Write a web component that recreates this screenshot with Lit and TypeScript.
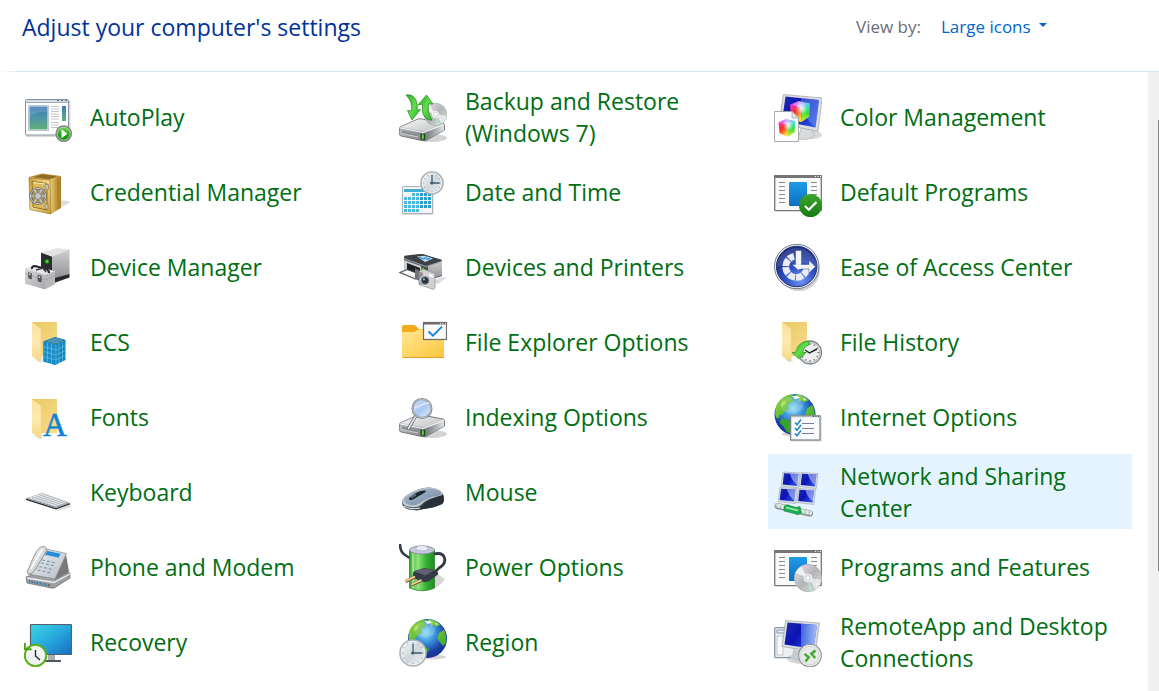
import { LitElement, html, svg, css, SVGTemplateResult } from "lit";
import { customElement, state } from "lit/decorators.js";
import { classMap } from "lit/directives/class-map.js";

const rows = (from: number, step: number, count: number) =>
  Array.from({ length: count }, (_, i) => from + i * step);

const ring = (cx: number, cy: number, r1: number, r2: number, count: number) =>
  rows(0, (Math.PI * 2) / count, count)
    .map((a) => {
      const c = Math.cos(a);
      const s = Math.sin(a);
      return `M${(cx + r1 * c).toFixed(2)} ${(cy + r1 * s).toFixed(2)}L${(cx + r2 * c).toFixed(2)} ${(cy + r2 * s).toFixed(2)}`;
    })
    .join("");

/* ---------- shared pieces ---------- */

const openFolder = (y: number) => svg`
  <path d="M8 ${y}h25v34H16z" fill="url(#folderBack)"/>
  <path d="M8 ${y}l9 7v31.500q0 2-1.600 1l-7.400-5.500z" fill="url(#folderFlap)"/>
  <path d="M17 ${y + 7}v31" stroke="#f6da86" stroke-width="1" fill="none"/>
  <path d="M9 ${y + 37}l7 3.500 4-1-3-2z" fill="#cfcfcf" opacity=".4"/>`;

const clock = (cx: number, cy: number, r: number) => svg`
  <circle cx=${cx} cy=${cy} r=${r} fill="url(#clockFace)" stroke="#aab2b9" stroke-width="1.600"/>
  <circle cx=${cx} cy=${cy} r=${r - 1.3} fill="none" stroke="#fff" stroke-width=".6"/>
  <path d=${ring(cx, cy, r - 3.2, r - 1.8, 12)} stroke="#98a3ac" stroke-width=".9"/>
  <path d="M${cx} ${cy - r * 0.72}V${cy + 1.5}M${cx - 2} ${cy}H${cx + r * 0.7}" stroke="#3e5c70" stroke-width="1.300" fill="none"/>
  <circle cx=${cx} cy=${cy} r="1.200" fill="#3e5c70"/>`;

const globe = (cx: number, cy: number, r: number) => svg`
  <ellipse cx=${cx + 3} cy=${cy + r - 1} rx=${r * 0.8} ry="2.500" fill="#777" opacity=".3"/>
  <circle cx=${cx} cy=${cy} r=${r} fill="url(#ocean)"/>
  <g transform="translate(${cx} ${cy}) scale(${r / 20})">
    <path d="M-19-5C-18-13-11-18-4-19.500L-1-18-4-16-1-14-4-11-7-10-6-6-10-3-13 1-15 0-16 4-18.500 3Q-20 0-19-5z" fill="url(#land)"/>
    <path d="M1-19.500Q8-19 13-14L9-12 6-14 3-12 4-16 0-17zM12-6L17-9Q20-3 19 4L16 8 13 4 10 0z" fill="url(#land)"/>
    <path d="M-13 4L-7 5-1 9 2 11-1 15-3 19-8 17-11 12-15 8z" fill="#35a32c"/>
    <path d="M-3-18L2-18 5-16 0-15zM8-16l3 1-2 1z" fill="#eefaf0"/>
    <path d="M-13-12l4-2-1 4-4 3z" fill="#b8e25a" opacity=".8"/>
    <ellipse cx="-3" cy="-9" rx="11" ry="8" fill="#fff" opacity=".17"/>
  </g>`;

const panelWindow = svg`
  <rect x=".7" y="6.700" width="46.600" height="35" rx="1" fill="#fafafa" stroke="#767676" stroke-width="1.300"/>
  <path d="M0 6.500q0-.5.500-.5h47q.5 0 .5.500V9H0z" fill="#757575"/>
  <path d="M41 7.500h1M43.500 7.500h1M46 7.500h1" stroke="#fff"/>
  <path d=${rows(13.5, 4, 6).map((y) => `M5 ${y}h6`).join("")} stroke="#8a8a8a"/>
  <path d=${rows(13.5, 4, 6).map((y) => `M37 ${y}h6`).join("")} stroke="#8a8a8a"/>
  <rect x="15" y="13" width="18" height="24" rx="1" fill="url(#azure)"/>`;

const drive = (y: number) => svg`
  <ellipse cx="32" cy=${y + 19} rx="16" ry="4" fill="#555" opacity=".25"/>
  <path d="M1 ${y + 8}L19 ${y}Q21 ${y - 0.5} 23 ${y}L44 ${y + 4}Q46 ${y + 5} 45.500 ${y + 7}V${y + 11}L27 ${y + 21.5}Q25 ${y + 22} 23 ${y + 21.5}L2 ${y + 17}Q0 ${y + 16} 0 ${y + 14}z" fill="url(#metalSide)" stroke="#5f6367" stroke-width=".8"/>
  <path d="M25 ${y + 13.5}L45 ${y + 6}V${y + 11}L26 ${y + 21.5}z" fill="url(#driveRight)"/>
  <path d="M1.500 ${y + 8}L19 ${y + 0.5}Q21 ${y} 23 ${y + 0.5}L44.500 ${y + 5}L26 ${y + 12.5}Q24 ${y + 13} 22 ${y + 12.3}z" fill="url(#metalTop)"/>
  <path d="M1 ${y + 8.8}L24 ${y + 13.6} 45 ${y + 5.6}" stroke="#f8f8f8" stroke-width="1" fill="none"/>
  <path d="M3 ${y + 11.500}l16 3.500v3.500L3 ${y + 15}z" fill="#8b8e91"/>
  <path d="M3 ${y + 14.500}l16 3.500" stroke="#dfe1e2" stroke-width=".8"/>
  <path d="M21.500 ${y + 14.5}l4.500 .5v6l-4.500-.8z" fill="#23372a"/>
  <path d="M22.800 ${y + 15.300}l2 .2v4.500l-2-.3z" fill="#51e425"/>`;

const disc = (cx: number, cy: number, r: number) => svg`
  <circle cx=${cx} cy=${cy} r=${r - 0.3} fill="url(#discFill)" stroke="#a9adb1" stroke-width=".7"/>
  <path d="M${cx} ${cy}L${cx - r * 0.9} ${cy - r * 0.35}A${r} ${r} 0 0 1 ${cx - r * 0.5} ${cy - r * 0.82}z" fill="#fff" opacity=".7"/>
  <path d="M${cx} ${cy}L${cx + r * 0.95} ${cy + r * 0.1}A${r} ${r} 0 0 1 ${cx + r * 0.55} ${cy + r * 0.78}z" fill="#fff" opacity=".55"/>
  <path d="M${cx} ${cy}L${cx - r * 0.3} ${cy - r * 0.9}A${r} ${r} 0 0 1 ${cx - r * 0.1} ${cy - r * 0.94}z" fill="#ecb8e6" opacity=".8"/>
  <path d="M${cx} ${cy}L${cx + r * 0.3} ${cy + r * 0.9}A${r} ${r} 0 0 1 ${cx + r * 0.1} ${cy + r * 0.94}z" fill="#b3efc0" opacity=".8"/>
  <circle cx=${cx} cy=${cy} r=${r * 0.28} fill="#d7dadd" stroke="#f8f8f8" stroke-width=".9"/>
  <circle cx=${cx} cy=${cy} r=${r * 0.12} fill="#fff"/>`;

const hueCube = (x: number, y: number, s: number) => svg`
  <g transform="translate(${x} ${y}) scale(${s})">
    <path d="M0 3L7 0 16 2 9 5.500z" fill="url(#hueTop)"/>
    <path d="M0 3L9 5.500V17L1 13.500z" fill="url(#hueLeft)"/>
    <path d="M9 5.500L16 2 15.300 12.500 9 17z" fill="url(#hueRight)"/>
    <ellipse cx="9" cy="6" rx="5" ry="5.500" fill="url(#hueGlow)"/>
  </g>`;

/* ---------- icons, each on a 48 x 48 grid ---------- */

const icons: Record<string, SVGTemplateResult> = {
  autoplay: svg`
    <rect x="2" y="6" width="44.500" height="37" rx="1" fill="#999" opacity=".35"/>
    <rect x="1.500" y="5.500" width="43" height="35.500" rx="1" fill="#fff" stroke="#8795a3"/>
    <path d="M2 6h42v3H2z" fill="#d3dde6"/>
    <path d="M2 8.500h42" stroke="#8ea0b0" stroke-width=".8"/>
    <path d="M33 6.500h2M37 6.500h2M41 6.500h2" stroke="#51718e"/>
    <rect x="4.500" y="11.500" width="20" height="25" fill="#eef3f6" stroke="#b9c8d2"/>
    <rect x="5.500" y="12.500" width="18" height="23" fill="url(#media)"/>
    <path d="M5.500 23q8-6 18-5v-5.500h-18z" fill="#fff" opacity=".13"/>
    <path d=${[...rows(12.5, 2.5, 6), 28.5, 31, 33.5].map((y) => `M27 ${y}h8`).join("")} stroke="#c2c6ca"/>
    <rect x="38" y="12" width="4" height="15" fill="url(#media)"/>
    <circle cx="39.700" cy="39.700" r="7.600" fill="url(#green)" stroke="#858c87" stroke-width="1.600"/>
    <circle cx="39.700" cy="39.700" r="6.400" fill="none" stroke="#d9f5cf" stroke-width=".6"/>
    <path d="M37.500 35.200l6 4.500-6 4.500z" fill="#fff"/>`,

  credential: svg`
    <path d="M26 44L45 34q2-2-2-2l-8-1z" fill="#888" opacity=".3"/>
    <path d="M5 8L18 4.500 37 7 26 11z" fill="#b59034"/>
    <path d="M9 8L19 5.500 33 7.500 25 10z" fill="#8f6d22"/>
    <path d="M26 11L37 7V39L27 45z" fill="url(#goldSide)"/>
    <path d="M5 8.500L26 11 27 45 6 40.500z" fill="url(#gold)" stroke="#9a7420" stroke-width=".7"/>
    <path d="M8 12.500L23 14.500V41L9 38z" fill="#dcb85a" stroke="#8c6818" stroke-width=".9"/>
    <path d="M9 13.500l13.500 1.800" stroke="#fff2bd"/>
    <path d="M34 8.500V40" stroke="#a17a25" stroke-width=".7"/>
    <circle cx="14" cy="27" r="7.500" fill="#8d8464" opacity=".7"/>
    <circle cx="14" cy="27" r="7.600" fill="none" stroke="#65686b" stroke-width="2.200"/>
    <circle cx="14" cy="27" r="7.600" fill="none" stroke="#dcdddf" stroke-width=".8"/>
    <path d=${ring(14, 27, 2, 7.5, 6)} stroke="#d4d5d6" stroke-width="1.200"/>
    <circle cx="14" cy="27" r="3.400" fill="#c3c5c7" stroke="#74777a" stroke-width=".8"/>
    <path d="M21 15.500h3.500v5H21zM21 35h3v5h-3z" fill="#c4c4bb" stroke="#7d725a" stroke-width=".6"/>`,

  device: svg`
    <path d="M17 8.500L28 12.500V36L17 31z" fill="#2c2d2f"/>
    <path d="M17 8.500L34 4 45.500 5.500 28 12.500z" fill="#e3e3e5"/>
    <path d="M28 12.500L45.500 5.500V31L28 36z" fill="url(#greyDown)"/>
    <path d="M29 34.500l16.500-4.500v3.500L30 39z" fill="#2a2a2c"/>
    <circle cx="23" cy="17.500" r="2.600" fill="#1d7a17" opacity=".7"/>
    <circle cx="23" cy="17.500" r="1.400" fill="#35f020"/>
    <path d="M1 24.500L12 21.500 31 27.500V40L21 45.300 1 39.500z" fill="#c9c9cd"/>
    <path d="M1 24.500L12 21.500 31 27.500 21 31z" fill="#e8e8ea"/>
    <path d="M1 24.500L21 31V45.300L1 39.500z" fill="url(#caseFront)"/>
    <path d="M21 31l10-3.500V40l-10 5.300z" fill="#b7b7bc"/>
    <path d="M1 29.500L21 36l10-4" stroke="#9c9ca1" stroke-width=".7" fill="none"/>
    <path d="M8 25q-.5-3 3-3l11 3q3 1 3 4" stroke="#26272a" stroke-width="2.200" fill="none"/>
    <path d="M12 26l7-2 3 4" stroke="#3a3b3e" stroke-width="1.500" fill="none"/>
    <path d="M4.500 28.500l3 1V35l-3-1zM14 31l3.200 1v6L14 37z" fill="#55565a" stroke="#38393b" stroke-width=".5"/>
    <path d="M5 29l1.500.5v2L5 31zM14.600 31.700l1.600.5v2l-1.600-.5z" fill="#c8c8cc"/>`,

  ecs: svg`
    ${openFolder(3)}
    <path d="M17 37h3v5l-3 1z" fill="#e7eef5"/>
    <path d="M19.500 22.500L31 18l10.500 3V41L31 46l-11.500-3.500z" fill="#1583bd"/>
    <path d="M19.500 22.500L31 18l10.500 3L32 25.500z" fill="#3f7f9d"/>
    <path d="M19.500 22.500L32 25.500V46L19.500 42.500z" fill="#1c8cc6"/>
    <path d="M19.500 27.500L32 31l9.500-4.500M19.500 32.500L32 36l9.500-4.500M19.500 37.500L32 41l9.500-4.500M23.500 24v19.500M27.500 25v20M35 24.500v19.500M38.500 23v19.500M32 25.500V46" stroke="#62bfe8" stroke-width=".7" fill="none"/>
    <path d="M23.500 21L35 24M27.500 19.500l11 3M23 23.500L34.500 19M27.500 24.500l10.500-4.500" stroke="#5fb4d8" stroke-width=".6"/>`,

  fonts: svg`
    ${openFolder(5)}
    <text x="31" y="42" text-anchor="middle" font-family="Liberation Serif, serif" font-size="33" fill="#0c83d4" stroke="#0c83d4" stroke-width=".5">A</text>`,

  keyboard: svg`
    <path d="M3 31L32 41.500 47 36v2L33 42z" fill="#777" opacity=".3"/>
    <path d="M2 29.500L32 39 46 34v1.500L32 40.500 2 31z" fill="#26333a"/>
    <path d="M2 29.500L18 24 46 34 32 39z" fill="#8b949a"/>
    <path d="M4.500 29L18 24.600 43.500 33.700 32 37.800z" fill="#f1f3f5"/>
    <path d="M8 28L35 36.700M11.500 26.800L38 35.600M15 25.600L41 34.600" stroke="#a0a9af" stroke-width=".6"/>
    <path d=${rows(0, 1, 9).map((i) => `M${7.5 + i * 2.9} ${30 + i * 0.95}l13-4.500`).join("")} stroke="#a0a9af" stroke-width=".6"/>`,

  phone: svg`
    <path d="M2 33L20 27 46 29v5L31 43.500Q29 44.500 27 44L3 39z" fill="#9b9fa2" stroke="#66696c" stroke-width=".7"/>
    <path d="M3 34L30 38.500 46 30" stroke="#f0f0f0" stroke-width="1.300" fill="none"/>
    <path d="M5 36.300l21 4.200v2l-21-4.200z" fill="#5e6468"/>
    <path d="M6 37.500l19 3.800" stroke="#55bdf0" stroke-width="1.500" stroke-dasharray="1.500 1.300"/>
    <path d="M42 10L45 28 31 36 30 33z" fill="#77797d"/>
    <path d="M20 4.500L42.500 9.500 31 35 4 30z" fill="url(#phoneBody)" stroke="#85888c" stroke-width=".7"/>
    <path d="M23 6.500l14 3-2.200 4.500-14.300-3z" fill="#2b8ad8" stroke="#b9dff5" stroke-width=".7"/>
    <path d="M18 16l14 3M17 19l14 3M15 22.500l14 3M13.500 26l13.500 3" stroke="#7f9ab3" stroke-width="1.200" stroke-dasharray="3 2"/>
    <path d="M5 24Q1.500 28.500 4.500 30 8 31 11 26L22 8Q24 3.500 20 2.500 16 2 13.500 6L10 12Q9 15 7 19z" fill="url(#metalTop)" stroke="#7b7e82" stroke-width=".8"/>
    <path d="M7 25Q11 17 18.500 5" stroke="#fff" stroke-width="1.500" fill="none"/>`,

  recovery: svg`
    <rect x="6.500" y="5.500" width="41" height="30" rx=".5" fill="url(#screenCyan)" stroke="#55606a" stroke-width="1.200"/>
    <path d="M24 36h7v5.500h-7z" fill="#a8adb1"/>
    <path d="M21 41h16v2H21z" fill="#53585d"/>
    <circle cx="11.500" cy="36.500" r="10.700" fill="#f3f3f3" stroke="#5bb01c" stroke-width="2"/>
    <path d="M.8 24v6.200h6.800" stroke="#46a512" stroke-width="2" fill="none"/>
    <path d="M1 30.500l3.500-1.800" stroke="#46a512" stroke-width="2"/>
    <path d="M11.500 31v6l4.500 4" stroke="#222" stroke-width="1.300" fill="none"/>`,

  backup: svg`
    ${drive(25)}
    ${disc(36.5, 20.5, 11.5)}
    <path d="M7 1Q14 0 17 6 19 10 18 16l3.500-.5L13 26 8.500 16.500l4 .2Q14 8 7 1z" fill="url(#greenArrow)" stroke="#24861d" stroke-width=".7"/>
    <path d="M33 26Q27 27 24 20 23 16 23.500 10L19 11 27.500 1 34 10l-4.500-.3Q28 18 33 26z" fill="url(#greenArrow)" stroke="#24861d" stroke-width=".7"/>`,

  datetime: svg`
    <rect x="3.500" y="18" width="31" height="28" fill="#888" opacity=".3"/>
    <rect x="3.500" y="17.500" width="30" height="27" rx=".5" fill="#f3f6f7" stroke="#a9b2b7"/>
    <path d="M5 20h20v3H5z" fill="#3fb1d6"/>
    ${rows(0, 1, 5).map((r) =>
      rows(0, 1, 7).map((c) =>
        (r === 0 && c < 2) || (r === 4 && c > 3)
          ? svg``
          : svg`<rect x=${5 + c * 4} y=${24 + r * 4} width="3" height="3" fill=${c > 3 ? "#2b9cc4" : "#4ab9dc"}/>`
      )
    )}
    ${clock(33, 14, 11)}`,

  printers: svg`
    <path d="M30 38l14-5 3 1-8 6z" fill="#777" opacity=".25"/>
    <path d="M5 13L24 10 43 17V32L30 36 5 27z" fill="#4e5256"/>
    <path d="M29 21l14-4.500V31L29 36z" fill="url(#greyDown)"/>
    <path d="M5 13Q5 12 7 11.600L21 10Q23 9.800 25 10.500L42 15.500Q43.500 16 42.500 17L30 21.500Q28 22 26 21.500L6 14.500z" fill="#3c4246"/>
    <path d="M5 14.500L27 22.500 43 17.500" stroke="#9aa0a5" stroke-width="1" fill="none"/>
    <path d="M18 12.500l8-.8 8 2.800-8 3.500z" fill="#bfe0f6"/>
    <path d="M20 13l5 2 3-3M27 15l4-.5" stroke="#3e8dc6" stroke-width="1.300" fill="none"/>
    <path d="M5 16l17 6V32L5 27z" fill="#c9cbcd"/>
    <path d="M8 19l13 5V30L8 26z" fill="#1f2326"/>
    <path d="M1 28.500L8 25.500 20 30v3.500l-4 1.500z" fill="#e6e8ea" stroke="#4e5256" stroke-width="1.100"/>
    <path d="M4 28.500l5-1.800 9 3.300-2 2.300z" fill="#fff"/>
    <path d="M16 24.500l4.500 2V37l-4.500-2z" fill="#6e7175"/>
    <path d="M20 27.500L24 25l12 4.500V44l-2 1.300-14-4.800z" fill="#d0d2d4" stroke="#8a8d90" stroke-width=".7"/>
    <path d="M20 27.500l4 1.500v12.500L20 40z" fill="#8b8e92"/>
    <path d="M22 24.500l3-.8v2l-3 .5z" fill="#53c92c"/>
    <circle cx="26" cy="36.500" r="5" fill="#777b80" stroke="#e9eaeb"/>
    <circle cx="26" cy="36.500" r="3" fill="#24333f"/>
    <circle cx="25" cy="35.500" r="1" fill="#9fd3ee"/>
    <path d="M30 29.500l4 1.300v2.700l-4-1.300z" fill="#f5f5f5"/>`,

  explorer: svg`
    <path d="M3 8Q3 6 5 6h9q2 0 3 1l3 3h24q1 0 1 1v12H3z" fill="#f4ab1a"/>
    <path d="M3 14.500Q3 13 5 13h9q2 0 3-1l2-1.500h25q1 0 1 1V37.500q0 1.500-1.500 1.500h-39Q3 39 3 37.500z" fill="url(#folderFront)"/>
    <path d="M3.500 38.500h41" stroke="#dda128" stroke-width="1"/>
    <rect x="24.500" y="3.500" width="23" height="17" fill="#fafafa" stroke="#6c6c6c" stroke-width="1.200"/>
    <path d="M24 4h24v1.500H24z" fill="#6c6c6c"/>
    <path d="M41 4.500h1M43.500 4.500h1M46 4.500h1" stroke="#fff" stroke-width=".8"/>
    <path d="M29.500 12.500l4.500 4.200 9-9" stroke="#1583da" stroke-width="1.900" fill="none"/>`,

  indexing: svg`
    ${drive(21)}
    <path d="M17 21.500L9.500 34.500" stroke="#6e7277" stroke-width="3.400" stroke-linecap="round"/>
    <path d="M17 21.500L9.500 34.500" stroke="#e3e5e7" stroke-width="1.600" stroke-linecap="round"/>
    <circle cx="23" cy="14.500" r="9.500" fill="url(#lens)" stroke="#7e8388" stroke-width="2"/>
    <circle cx="23" cy="14.500" r="9.300" fill="none" stroke="#d9dcdf" stroke-width=".7"/>
    <path d="M15.500 14q4-1 7-3t8-2" stroke="#fff" stroke-width="1.500" fill="none" opacity=".7"/>`,

  mouse: svg`
    <path d="M14 41Q6 41 3.500 36 2 31 6 27.500 18 19 29 18.500 40 18.500 44 25 46 31 44 34L34 38 18 41.500z" fill="#3c4a55"/>
    <path d="M3.500 34Q3 30 6 27.500 18 19 29 18.500 39 18.500 43 23 45 27 39 28 28 29 22 36 18 39 12 38 5 37.500 3.500 34z" fill="#c3cad0"/>
    <path d="M5 31.500Q5.500 28.500 9 26.500 20 19.500 30 19.500 38 19.500 42 23 43.500 26 38 27 28 28.500 22 33.500 17 37 11 36 5.500 35 5 31.500z" fill="url(#mouseTop)"/>
    <path d="M44 26Q30 29 23 37l-2 3.500Q36 39 43.500 35 46 31 44 26z" fill="#273039"/>
    <path d="M10 29Q9 32 14 30.500L25 24Q29 21.500 25 21.500 21 21.500 16 24.500z" fill="#20272c"/>
    <path d="M12 28.500l5-3" stroke="#687680" stroke-width="1.500"/>
    <path d="M5 37q6 4 16 2" stroke="#eef0f2" stroke-width="1" fill="none"/>`,

  power: svg`
    <path d="M32 46Q42 42 46 35l-9-6z" fill="#777" opacity=".3"/>
    <path d="M1 0Q1 8 6 11t7 5" stroke="#343745" stroke-width="2.600" fill="none"/>
    <path d="M10.500 6v38q13 5.500 25 0V6z" fill="url(#battery)" stroke="#2b8328" stroke-width=".8"/>
    <path d="M14 9v35.500" stroke="#c2f5b3" stroke-width="2.500" opacity=".6"/>
    <ellipse cx="23" cy="6" rx="12.500" ry="4" fill="#c4c8e0" stroke="#7e8496" stroke-width=".8"/>
    <path d="M17 3.500Q23-1 29 3.500V6q-6 2-12 0z" fill="#e9ecf5" stroke="#9aa0b4" stroke-width=".6"/>
    <path d="M35 10q9-2 10.500 4T40 24l-5 5" stroke="#343745" stroke-width="2.800" fill="none"/>
    <path d="M14 29l1.500-2 9.500-3 11 2q3.500 1.500 3 4.500l-9.500 7-4 .8-12-4.300z" fill="#363a47"/>
    <path d="M15.500 27.500l9.500-3.300 10 2.300-8.500 5z" fill="#5c6070"/>
    <path d="M6.500 37.500L16 33M12.500 41l10-4.500" stroke="#8e6534" stroke-width="3.200"/>
    <path d="M6.500 37L16 32.600M12.500 40.500l10-4.500" stroke="#f2d2a0" stroke-width="1.600"/>`,

  region: svg`${globe(28.5, 19.5, 19.5)}${clock(14, 34, 13)}`,

  color: svg`
    <ellipse cx="38" cy="41" rx="10" ry="4" fill="#666" opacity=".25"/>
    <path d="M27 34l12 2q-1 3 2 5-5 6-17 4z" fill="#d8dadc" stroke="#a5a8ab" stroke-width=".6"/>
    <path d="M9.500.5L48 4 44 37.500 5 29z" fill="#dcdee0" stroke="#9da0a4" stroke-width=".7"/>
    <path d="M11.500 2.500L45 6 41.500 33.500 8 27z" fill="url(#screenBlue)"/>
    <path d="M27 4.300L45 6 41.500 33.500Q27 22 27 4.300z" fill="#7fa2f5" opacity=".45"/>
    ${hueCube(16, 7, 1.25)}
    <path d="M.5 17.500H18l6.500 6.500V47.500H.5z" fill="#fdfdfd" stroke="#a2a2a2" stroke-width=".9"/>
    <path d="M18 17.500V24h6.500z" fill="#e2e2e2" stroke="#a2a2a2" stroke-width=".7"/>
    ${hueCube(4.5, 25, 1.05)}`,

  defaults: svg`
    ${panelWindow}
    <circle cx="36.500" cy="36.500" r="11.500" fill="url(#checkGreen)"/>
    <path d="M31 37l3.800 3.800 7.700-7.800" stroke="#fff" stroke-width="2.200" fill="none"/>`,

  ease: svg`
    <ellipse cx="25" cy="26" rx="21" ry="21" fill="#777" opacity=".35"/>
    <circle cx="22.700" cy="22.500" r="22.200" fill="#f6f7f9" stroke="#71798c" stroke-width="1"/>
    <circle cx="22.700" cy="22.500" r="20.300" fill="url(#easeBlue)" stroke="#243266" stroke-width="1"/>
    <path d="M2.600 22.500a20.200 20.200 0 0 1 40.200 0Q22 15 2.600 22.500z" fill="#fff" opacity=".12"/>
    <path d="M32.900 24.800A10.700 10.700 0 1 1 20 12.300" fill="none" stroke="#e9ecf4" stroke-width="6.800" stroke-dasharray="7 1"/>
    <path d="M21.500 6.500h6v14h3.500L24.500 26.500 18 20.500h3.500z" fill="#f3f4f8" stroke="#2b469f" stroke-width=".5"/>
    <path d="M27 20.500h8v-4.200l6.500 6.400-6.500 6.300V25h-11z" fill="#f3f4f8" stroke="#2b469f" stroke-width=".5"/>
    <path d="M22 20h5v5h-3z" fill="#f3f4f8"/>`,

  history: svg`
    ${openFolder(3)}
    <circle cx="36" cy="33.500" r="11.500" fill="#d7dadc" stroke="#7e8286" stroke-width="1.300"/>
    <circle cx="36" cy="33.500" r="9.800" fill="#eceeef" stroke="#b3b6b9" stroke-width=".7"/>
    <path d=${ring(36, 33.5, 7.5, 9.3, 12)} stroke="#585d61" stroke-width="1"/>
    <path d="M31 31l4.500 3 7.500-4" stroke="#23282c" stroke-width="1.500" fill="none"/>
    <path d="M35 22.500Q28 22 24 27.500L21.500 33.500H18l6.800 6.500 7.500-6.500h-3.500Q29.500 27.500 35 26z" fill="url(#greenArrow)" stroke="#2c9126" stroke-width=".7"/>`,

  internet: svg`
    ${globe(21, 20.5, 20.5)}
    <rect x="17" y="22" width="30.500" height="25.500" fill="#777" opacity=".3"/>
    <rect x="16.700" y="21.700" width="29.300" height="24.300" fill="#fafbfc" stroke="#7b8287" stroke-width="1.200"/>
    <path d="M17 22.500h29" stroke="#aeb8be" stroke-width="1.500"/>
    <path d="M39 22.500h1M41.500 22.500h1M44 22.500h1" stroke="#33536c" stroke-width="1.200"/>
    <path d="M28 29.500h12M28 34.500h12M28 39.500h12" stroke="#7a7c99"/>
    <path d="M21 28.500l2 2.200 4-5.200M21 34l2 2.200 4-5.200M21 39.500l2 2.200 4-5.200" stroke="#2589c4" stroke-width="1.600" fill="none"/>`,

  network: svg`
    ${[[8, 3], [26, 3.5], [5, 18.5], [23.5, 19.5]].map(
      ([x, y]) => svg`<g transform="translate(${x} ${y})">
        <path d="M1 0L18 1 16.300 16-.8 14z" fill="#dcdfe6" stroke="#9ba1ad" stroke-width=".6"/>
        <path d="M2 1.200L16.500 2 15 14 .7 12.400z" fill="url(#screenBlue)"/>
        <path d="M8 1.600L16.500 2 15.200 13Q9 8 8 1.600z" fill="#b9caf8" opacity=".6"/>
      </g>`
    )}
    <path d="M3.500 37L36 44.500" stroke="#7f8c87" stroke-width="6" stroke-linecap="round"/>
    <path d="M3.500 36.500L36 44" stroke="#e1ebe7" stroke-width="4.200" stroke-linecap="round"/>
    <path d="M3 35.500v3M6.500 36.500v3M31 41.500v4M35 42.500v3.500" stroke="#9fb3ab" stroke-width="1"/>
    <path d="M10 37.500Q12 34.500 17 37l5 1.500 4-1 1.500 6.500Q24 47 20 44.500l-10-2.500z" fill="#1fae50" stroke="#148741" stroke-width=".6"/>
    <path d="M12 38.500l12 3" stroke="#a5f0b9" stroke-width="1.400"/>`,

  programs: svg`${panelWindow}${disc(34, 34, 14)}`,

  remote: svg`
    <rect x=".700" y="8.700" width="26" height="30" rx="1" fill="#eceff2" stroke="#8796a5" stroke-width="1.300"/>
    <path d="M3 11h8v3H3z" fill="none" stroke="#7f97ae"/>
    <path d="M3 17h6v19H3z" fill="#f8f9fa" stroke="#b5bfc9" stroke-width=".8"/>
    <ellipse cx="26" cy="40" rx="13" ry="5" fill="#888" opacity=".3"/>
    <path d="M19 30l11 2v12q-12-1-14-6 3-2 3-8z" fill="#c8cbce"/>
    <path d="M11.500 1.500L45.500 4 41.500 33 8 27.500z" fill="#d9dcdf" stroke="#9da2a7" stroke-width=".7"/>
    <path d="M13.500 3.500L43 6 39.500 30 10.500 25.500z" fill="url(#screenBlue)"/>
    <path d="M27 4.700L43 6 39.500 30 27 28z" fill="url(#screenShine)" opacity=".8"/>
    <circle cx="36" cy="36.500" r="11.300" fill="#f3f3f3" stroke="#8e9296" stroke-width="1.100"/>
    <circle cx="36" cy="36.500" r="9.300" fill="#e7e8e8" stroke="#c2c4c6" stroke-width=".7"/>
    <path d="M30.500 35l4.200 3.200-3.200 4.300M41.500 31.500l-4.200 3.200 4 4.300" stroke="#43a82f" stroke-width="2.400" fill="none"/>`,
};

const stop = (offset: number, color: string) =>
  svg`<stop offset=${offset} stop-color=${color}/>`;

const gradient = (id: string, colors: string[], x2 = 0, y2 = 1) => svg`
  <linearGradient id=${id} x1="0" y1="0" x2=${x2} y2=${y2}>
    ${colors.map((c, i) => stop(i / (colors.length - 1), c))}
  </linearGradient>`;

const radial = (id: string, colors: string[], fx: number, fy: number, r = 0.75) => svg`
  <radialGradient id=${id} cx=${fx} cy=${fy} r=${r}>
    ${colors.map((c, i) => stop(i / (colors.length - 1), c))}
  </radialGradient>`;

const palette = svg`
  ${gradient("folderBack", ["#e9c763", "#f7dd8b"], 1, 1)}
  ${gradient("folderFlap", ["#fbe29a", "#fdeab2", "#f5d784"])}
  ${gradient("folderFront", ["#ffe694", "#ffd768", "#fbc53d"], 1, 1)}
  ${gradient("azure", ["#1d9bea", "#0d6fc0"])}
  ${gradient("media", ["#3f7bb8", "#4d95a5", "#63ae79"])}
  ${gradient("green", ["#7dd959", "#2aa51c", "#128a10"])}
  ${gradient("greenArrow", ["#2aa82a", "#63dd4b", "#2fae2c"], 1, 1)}
  ${gradient("checkGreen", ["#3ea52e", "#187a12"])}
  ${gradient("metalTop", ["#fbfbfb", "#b9bcbf"], 1, 1)}
  ${gradient("metalSide", ["#b9bcbf", "#85898c", "#d8dadb"], 1, 0)}
  ${gradient("driveRight", ["#6f7376", "#a3a6a9", "#e2e3e4"], 1, 0)}
  ${gradient("greyDown", ["#cfcfd1", "#8f9094"])}
  ${gradient("caseFront", ["#d9d9dc", "#a6a6ac"], 1, 1)}
  ${gradient("phoneBody", ["#f4f5f6", "#b7bcc2"], 1, 1)}
  ${gradient("screenCyan", ["#3ad6e6", "#27a8dc", "#166cc4"], 1, 1)}
  ${gradient("screenBlue", ["#1b2fae", "#0b12b4", "#2a4fdf"], 1, 0.6)}
  ${gradient("screenShine", ["#4a78ea", "#c9dbfb"], 1, 0)}
  ${gradient("gold", ["#c79a35", "#f4dc8a", "#c59a38"], 1, 1)}
  ${gradient("goldSide", ["#efd27c", "#c79c3d", "#a67d28"], 1, 0)}
  ${gradient("battery", ["#2ea22c", "#8de57c", "#35b133", "#228a23"], 1, 0)}
  ${gradient("mouseTop", ["#a9bdd2", "#7388a0"], 1, 1)}
  ${gradient("clockFace", ["#fbfcfc", "#cfd7db", "#f2f5f6"], 1, 1)}
  ${gradient("discFill", ["#e6e7e9", "#b2b6b9", "#dfe1e3"], 1, 1)}
  ${gradient("land", ["#9bdb45", "#3aa72d"], 1, 1)}
  ${gradient("lens", ["#cfe2fb", "#a9c7f2", "#e6f1fd"], 1, 1)}
  ${gradient("hueTop", ["#e63bf0", "#c9a6ff", "#35e0f5"], 1, 0)}
  ${gradient("hueLeft", ["#f53bd0", "#ff2a1c", "#ffe23c"], 0.6, 1)}
  ${gradient("hueRight", ["#3ae3f5", "#3ddf3d", "#e8f032"], 0, 1)}
  <radialGradient id="hueGlow">
    <stop offset="0" stop-color="#fff" stop-opacity=".95"/>
    <stop offset="1" stop-color="#fff" stop-opacity="0"/>
  </radialGradient>
  ${radial("ocean", ["#8fdcf6", "#3a95dc", "#1a3fa6", "#132a80"], 0.45, 0.35)}
  ${radial("easeBlue", ["#6d93f0", "#2e51c4", "#1c2f86"], 0.6, 0.85)}`;

interface Item {
  label: string;
  icon: string;
}

const items: Item[] = [
  { label: "AutoPlay", icon: "autoplay" },
  { label: "Backup and Restore (Windows 7)", icon: "backup" },
  { label: "Color Management", icon: "color" },
  { label: "Credential Manager", icon: "credential" },
  { label: "Date and Time", icon: "datetime" },
  { label: "Default Programs", icon: "defaults" },
  { label: "Device Manager", icon: "device" },
  { label: "Devices and Printers", icon: "printers" },
  { label: "Ease of Access Center", icon: "ease" },
  { label: "ECS", icon: "ecs" },
  { label: "File Explorer Options", icon: "explorer" },
  { label: "File History", icon: "history" },
  { label: "Fonts", icon: "fonts" },
  { label: "Indexing Options", icon: "indexing" },
  { label: "Internet Options", icon: "internet" },
  { label: "Keyboard", icon: "keyboard" },
  { label: "Mouse", icon: "mouse" },
  { label: "Network and Sharing Center", icon: "network" },
  { label: "Phone and Modem", icon: "phone" },
  { label: "Power Options", icon: "power" },
  { label: "Programs and Features", icon: "programs" },
  { label: "Recovery", icon: "recovery" },
  { label: "Region", icon: "region" },
  { label: "RemoteApp and Desktop Connections", icon: "remote" },
];

@customElement("app-root")
export class AppRoot extends LitElement {
  @state() private active = "network";

  static styles = css`
    :host {
      display: flex;
      flex-direction: column;
      min-height: 100vh;
      background: #fff;
      font-family: "Open Sans", "Noto Sans", sans-serif;
      color: #006e12;
    }
    .palette {
      display: block;
      width: 0;
      height: 0;
    }
    .header {
      display: flex;
      align-items: center;
      justify-content: space-between;
      box-sizing: border-box;
      min-height: 71px;
      padding: 0 112px 18px 22px;
    }
    h1 {
      margin: 0;
      font-size: 23px;
      line-height: 32px;
      font-weight: 400;
      color: #003399;
    }
    .rule {
      height: 1px;
      background: linear-gradient(to right, #fff, #d6e5f5 20px);
    }
    .view {
      display: flex;
      align-items: center;
      font-size: 17px;
      line-height: 24px;
    }
    .view label {
      margin-right: 20px;
      color: #6a6d78;
    }
    .view select {
      appearance: none;
      margin: 0;
      padding: 0;
      border: 0;
      background: none;
      font: inherit;
      color: #0066cc;
    }
    .caret {
      width: 8px;
      height: 4px;
      margin: 0 0 4px 8px;
      fill: #0066cc;
    }
    .body {
      display: flex;
      flex: 1;
    }
    .grid {
      flex: 1;
      display: grid;
      grid-template-columns: repeat(auto-fill, minmax(300px, 1fr));
      column-gap: 11px;
      align-content: start;
      padding: 7px 16px 0 18px;
    }
    .item {
      display: flex;
      align-items: center;
      gap: 18px;
      box-sizing: border-box;
      min-height: 75px;
      padding: 6px 6px 3px;
      font-size: 23px;
      line-height: 32px;
      color: inherit;
      text-decoration: none;
    }
    .item.active {
      background: #e5f3ff;
    }
    .icon {
      flex: none;
      width: 48px;
      height: 48px;
    }
    .label {
      padding-bottom: 2px;
    }
    .track {
      display: flex;
      flex-direction: column;
      align-items: flex-end;
      width: 11px;
      background: #f0f0f0;
    }
    .track-gap {
      flex: 48;
    }
    .thumb {
      flex: 451;
      width: 1px;
      background: #858585;
    }
    .track-rest {
      flex: 120;
    }
  `;

  render() {
    return html`
      <svg class="palette" aria-hidden="true"><defs>${palette}</defs></svg>
      <header class="header">
        <h1>Adjust your computer's settings</h1>
        <div class="view">
          <label for="view">View by:</label>
          <select id="view">
            <option>Category</option>
            <option selected>Large icons</option>
            <option>Small icons</option>
          </select>
          <svg class="caret" viewBox="0 0 8 4" aria-hidden="true"><path d="M0 0h8L4 4z" /></svg>
        </div>
      </header>
      <div class="rule"></div>
      <div class="body">
        <main class="grid">
          ${items.map(
            (item) => html`<a
              href="#${item.icon}"
              class=${classMap({ item: true, active: item.icon === this.active })}
              @mouseenter=${() => (this.active = item.icon)}
            >
              <svg class="icon" viewBox="0 0 48 48" aria-hidden="true">${icons[item.icon]}</svg>
              <span class="label">${item.label}</span>
            </a>`
          )}
        </main>
        <div class="track" aria-hidden="true">
          <div class="track-gap"></div>
          <div class="thumb"></div>
          <div class="track-rest"></div>
        </div>
      </div>
    `;
  }
}
